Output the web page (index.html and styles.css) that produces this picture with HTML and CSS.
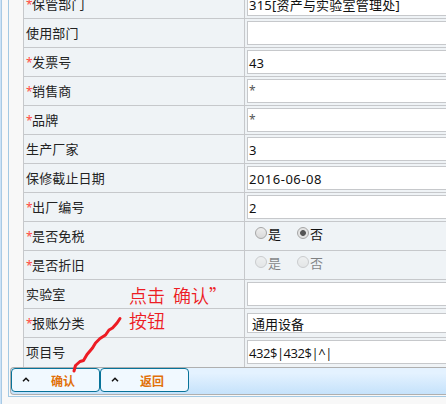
FILE: index.html
```html
<!DOCTYPE html>
<html lang="zh-CN">
<head>
<meta charset="utf-8">
<title>资产登记</title>
<link rel="stylesheet" href="styles.css">
</head>
<body>
<div class="window">
  <main class="panel">
    <div class="form">
      <div class="row"><div class="label"><i>*</i>保管部门</div><div class="cell"><div class="input dept">315[资产与实验室管理处]</div></div></div>
      <div class="row"><div class="label">使用部门</div><div class="cell"><div class="input"></div></div></div>
      <div class="row"><div class="label"><i>*</i>发票号</div><div class="cell"><div class="input">43</div></div></div>
      <div class="row"><div class="label"><i>*</i>销售商</div><div class="cell"><div class="input star">*</div></div></div>
      <div class="row"><div class="label"><i>*</i>品牌</div><div class="cell"><div class="input star">*</div></div></div>
      <div class="row"><div class="label">生产厂家</div><div class="cell"><div class="input">3</div></div></div>
      <div class="row"><div class="label">保修截止日期</div><div class="cell"><div class="input date">2016-06-08</div></div></div>
      <div class="row"><div class="label"><i>*</i>出厂编号</div><div class="cell"><div class="input">2</div></div></div>
      <div class="row"><div class="label"><i>*</i>是否免税</div><div class="cell radios"><span class="radio"></span><span class="option">是</span><span class="radio checked"></span><span class="option">否</span></div></div>
      <div class="row"><div class="label"><i>*</i>是否折旧</div><div class="cell radios disabled"><span class="radio"></span><span class="option">是</span><span class="radio"></span><span class="option">否</span></div></div>
      <div class="row"><div class="label">实验室</div><div class="cell"><div class="input"></div></div></div>
      <div class="row"><div class="label"><i>*</i>报账分类</div><div class="cell"><div class="input select">通用设备</div></div></div>
      <div class="row last"><div class="label">项目号</div><div class="cell"><div class="input code">432$|432$|^|</div></div></div>
    </div>
    <div class="toolbar">
      <div class="button"><svg class="caret" viewBox="0 0 8 5"><path d="M1 4.3 4 1.3 7 4.3"/></svg><span>确认</span></div>
      <div class="button"><svg class="caret" viewBox="0 0 8 5"><path d="M1 4.3 4 1.3 7 4.3"/></svg><span>返回</span></div>
    </div>
  </main>
</div>
<div class="note">点击 <span>确认”</span><br>按钮</div>
<svg class="stroke" viewBox="0 0 60 60"><path d="M51 7.5 48 12 43.5 17 40 19 36.5 24 31 27.5 26.5 32 23.5 37 18 43.5 14.5 49.5 11 50.5 6.5 54.5 5 60"/></svg>
</body>
</html>
```
FILE: styles.css
```css
* { box-sizing: border-box; }
body {
  margin: 0;
  width: 446px;
  height: 404px;
  overflow: hidden;
  position: relative;
  background: #f8f8f8;
  color: #222;
  font: 13px/18px "Noto Sans", "Noto Sans CJK SC", sans-serif;
}
.window {
  height: 404px;
  border-left: 1px solid #cbe2f7;
  box-shadow: inset 1px 0 #a8cae5;
  padding-left: 7px;
}
.panel {
  height: 397px;
  border-left: 1px solid #a3c9e3;
  border-bottom: 1px solid #a3c9e3;
  overflow: hidden;
}
.form {
  margin: -10px 0 0 14px;
  border-left: 1px solid #c6c8cb;
  background: #eff3f6;
}
.row {
  display: grid;
  grid-template-columns: 221px 1fr;
  height: 29px;
  border-bottom: 1px solid #c6c8cb;
}
.row.last { border-bottom: 0; }
.label {
  border-right: 1px solid #c6c8cb;
  padding: 5px 0 0 2px;
  white-space: nowrap;
  letter-spacing: .15px;
}
.label i {
  display: inline-block;
  width: 6px;
  color: #ff4a40;
  font-size: 12px;
  font-style: normal;
  letter-spacing: 0;
}
.cell { padding: 2px 0 0 2px; }
.input {
  height: 24px;
  border: 1px solid #c6c8cb;
  border-right: 0;
  background: #fff;
  color: #111;
  padding: 3px 0 0 1px;
  white-space: nowrap;
}
.input.dept { letter-spacing: .22px; }
.input.date { letter-spacing: .5px; }
.input.code { letter-spacing: -.12px; }
.input.star {
  padding-top: 2px;
  color: #555;
  font-size: 12px;
}
.input.code { font-family: "Open Sans", "Noto Sans", sans-serif; letter-spacing: -.45px; }
.input.select {
  height: 20px;
  margin-top: 2px;
  padding: 1px 0 0 4px;
}
.radios {
  display: flex;
  padding: 4px 0 0 10px;
  color: #111;
}
.radio {
  width: 12px;
  height: 12px;
  margin-top: 1px;
  border: 1px solid #a6a6a6;
  border-radius: 50%;
  background: linear-gradient(#ededed, #d9d9d9);
}
.checked {
  background: radial-gradient(circle, #555 0 2.5px, #e3e3e3 3.3px);
}
.option {
  width: 30px;
  margin-top: -1px;
  padding-left: 1px;
}
.disabled { opacity: .5; }
.toolbar {
  display: flex;
  height: 28px;
  margin-left: 1px;
  border: 1px solid #afafaf;
  border-right: 0;
  border-radius: 4px 0 0 4px;
  background: linear-gradient(#e4f2ff 20%, #c5e2fb);
}
.button {
  width: 89px;
  height: 24px;
  border: 1px solid #087399;
  border-radius: 4px;
  background: #f1f9ff;
  color: #e17009;
  font: bold 12px/23px "Noto Sans CJK SC", sans-serif;
  display: flex;
  align-items: center;
}
.caret {
  width: 8px;
  height: 5px;
  margin: 0 21px 2px 10px;
  fill: none;
  stroke: #111;
  stroke-width: 1.5;
}
.note {
  position: absolute;
  left: 129px;
  top: 283px;
  color: #ed1c24;
  font: 350 18px/25px "Noto Sans CJK SC", sans-serif;
  white-space: nowrap;
}
.note span { margin-left: 4px; }
.stroke {
  position: absolute;
  left: 69px;
  top: 310px;
  width: 60px;
  height: 62px;
  overflow: visible;
  fill: none;
  stroke: #ed1c24;
  stroke-width: 3;
  stroke-linecap: round;
  stroke-linejoin: round;
}
```
